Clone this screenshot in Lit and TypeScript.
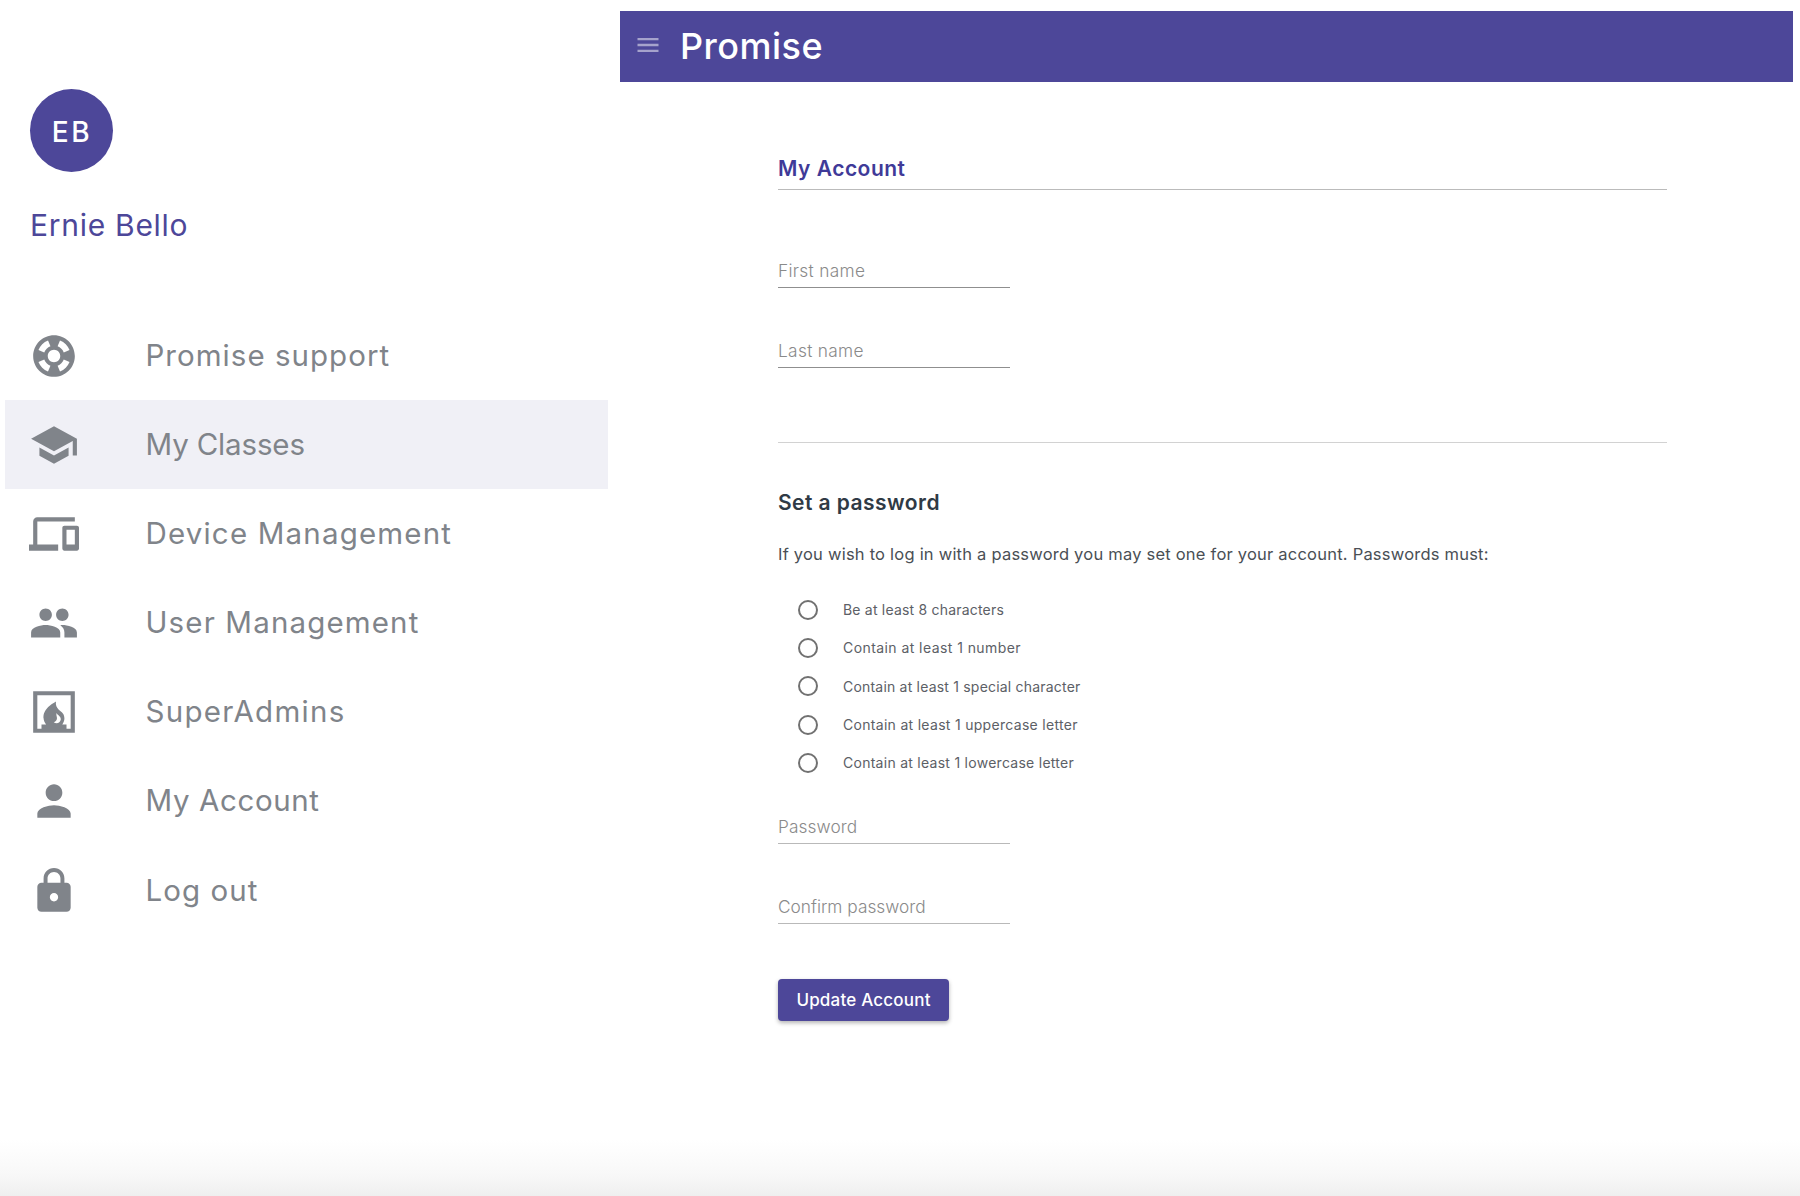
import { LitElement, html, css, svg } from "lit";
import { customElement } from "lit/decorators.js";

const icons = {
  support: "M12,2C6.48,2,2,6.48,2,12c0,5.52,4.48,10,10,10s10-4.48,10-10C22,6.48,17.52,2,12,2z M19.46,9.12l-2.78,1.15 c-0.51-1.36-1.58-2.44-2.95-2.94l1.15-2.78C16.98,5.35,18.65,7.02,19.46,9.12z M12,15c-1.66,0-3-1.34-3-3s1.34-3,3-3s3,1.34,3,3 S13.66,15,12,15z M9.13,4.54l1.17,2.78c-1.38,0.5-2.47,1.59-2.98,2.97L4.54,9.13C5.35,7.02,7.02,5.35,9.13,4.54z M4.54,14.87 l2.78-1.15c0.51,1.38,1.59,2.46,2.97,2.96l-1.17,2.78C7.02,18.65,5.35,16.98,4.54,14.87z M14.88,19.46l-1.15-2.78 c1.37-0.51,2.45-1.59,2.95-2.97l2.78,1.17C18.65,16.98,16.98,18.65,14.88,19.46z",
  school: "M5 13.18v4L12 21l7-3.82v-4L12 17l-7-3.82zM12 3L1 9l11 6 9-4.91V17h2V9L12 3z",
  devices: "M4 6h18V4H4c-1.1 0-2 .9-2 2v11H0v3h14v-3H4V6zm19 2h-6c-.55 0-1 .45-1 1v10c0 .55.45 1 1 1h6c.55 0 1-.45 1-1V9c0-.55-.45-1-1-1zm-1 9h-4v-7h4v7z",
  people: "M16 11c1.66 0 2.99-1.34 2.99-3S17.66 5 16 5c-1.66 0-3 1.34-3 3s1.34 3 3 3zm-8 0c1.66 0 2.99-1.34 2.99-3S9.66 5 8 5C6.34 5 5 6.34 5 8s1.34 3 3 3zm0 2c-2.33 0-7 1.17-7 3.5V19h14v-2.5c0-2.33-4.67-3.5-7-3.5zm8 0c-.29 0-.62.02-.97.05 1.16.84 1.97 1.97 1.97 3.45V19h6v-2.5c0-2.33-4.67-3.5-7-3.5z",
  fireplace: "M2 2v20h20V2H2zm9.86 14.96c.76-.24 1.4-1.04 1.53-1.63.13-.56-.1-1.05-.2-1.6-.08-.46-.07-.85.08-1.28.54 1.21 2.15 1.64 1.98 3.18-.19 1.69-2.11 2.37-3.39 1.33zM20 20h-2v-2h-2.02c.63-.84 1.02-1.87 1.02-3 0-1.89-1.09-2.85-1.85-3.37C12.2 9.61 13 7 13 7c-6.73 3.57-6.02 7.47-6 8 .03.96.49 2.07 1.23 3H6v2H4V4h16v16z",
  person: "M12 12c2.21 0 4-1.79 4-4s-1.79-4-4-4-4 1.79-4 4 1.79 4 4 4zm0 2c-2.67 0-8 1.34-8 4v2h16v-2c0-2.66-5.33-4-8-4z",
  lock: "M18 8h-1V6c0-2.76-2.24-5-5-5S7 3.24 7 6v2H6c-1.1 0-2 .9-2 2v10c0 1.1.9 2 2 2h12c1.1 0 2-.9 2-2V10c0-1.1-.9-2-2-2zm-6 9c-1.1 0-2-.9-2-2s.9-2 2-2 2 .9 2 2-.9 2-2 2zm3.1-9H8.9V6c0-1.71 1.39-3.1 3.1-3.1 1.71 0 3.1 1.39 3.1 3.1v2z",
  menu: "M3 18h18v-2H3v2zm0-5h18v-2H3v2zm0-7v2h18V6H3z",
};

const nav: [keyof typeof icons, string, boolean, number][] = [
  ["support", "Promise support", false, 1.03],
  ["school", "My Classes", true, -0.15],
  ["devices", "Device Management", false, 1.18],
  ["people", "User Management", false, 1.15],
  ["fireplace", "SuperAdmins", false, 1.28],
  ["person", "My Account", false, 0.62],
  ["lock", "Log out", false, 1.07],
];

const rules: [string, number][] = [
  ["Be at least 8 characters", 0.2],
  ["Contain at least 1 number", 0.43],
  ["Contain at least 1 special character", 0.2],
  ["Contain at least 1 uppercase letter", 0.3],
  ["Contain at least 1 lowercase letter", 0.27],
];

const icon = (name: keyof typeof icons) =>
  html`<svg viewBox="0 0 24 24" aria-hidden="true">${svg`<path d=${icons[name]}></path>`}</svg>`;

@customElement("app-root")
export class AppRoot extends LitElement {
  static styles = css`
    :host {
      display: flex;
      position: relative;
      width: 1800px;
      height: 1196px;
      overflow: hidden;
      background: #fff;
      font-family: Inter, "Liberation Sans", sans-serif;
    }
    :host::after {
      content: "";
      position: absolute;
      left: 0;
      right: 0;
      bottom: 0;
      height: 56px;
      background: linear-gradient(
        to bottom,
        rgba(239, 239, 239, 0) 0%,
        rgba(239, 239, 239, 0.25) 36%,
        rgba(239, 239, 239, 0.45) 62%,
        rgba(239, 239, 239, 1) 100%
      );
      pointer-events: none;
    }
    .sidebar {
      width: 620px;
      flex: none;
      box-sizing: border-box;
      padding-top: 89px;
    }
    .avatar {
      width: 83px;
      height: 83px;
      margin-left: 30px;
      border-radius: 50%;
      background: #4d4799;
      color: #fff;
      display: flex;
      align-items: center;
      justify-content: center;
      font-size: 28px;
      font-weight: 500;
      letter-spacing: 2.6px;
      padding: 2px 0 0 1px;
      box-sizing: border-box;
    }
    .name {
      margin: 35px 0 0 30px;
      height: 36px;
      line-height: 36px;
      font-size: 30px;
      font-weight: 400;
      color: #4d4799;
      letter-spacing: 0.72px;
    }
    nav {
      margin: 68px 0 0 5px;
      width: 603px;
    }
    .item {
      height: 89px;
      display: flex;
      align-items: center;
      gap: 66.5px;
      padding-left: 24px;
      color: #80848a;
      font-size: 29.5px;
    }
    .item span {
      margin-bottom: 2px;
    }
    .item:last-child {
      margin-top: 1px;
    }
    .item.active {
      background: #f0f0f6;
    }
    .item svg {
      width: 50px;
      height: 50px;
      fill: #80848a;
      flex: none;
    }
    main {
      flex: 1;
      min-width: 0;
      padding: 11px 7px 0 0;
    }
    header {
      height: 71px;
      background: #4d4799;
      display: flex;
      align-items: center;
      color: #fff;
      padding-left: 14px;
      gap: 18px;
    }
    header svg {
      width: 28px;
      height: 28px;
      margin-bottom: 3px;
      fill: rgba(255, 255, 255, 0.5);
      flex: none;
    }
    header h1 {
      margin: 0 0 2px;
      font-size: 36px;
      font-weight: 500;
      letter-spacing: 0.5px;
    }
    .form {
      width: 889px;
      margin: 0 0 0 158px;
      padding-top: 71px;
    }
    h2 {
      margin: 0;
      height: 37px;
      line-height: 32px;
      font-size: 21px;
      font-weight: 600;
      color: #3f3a98;
      border-bottom: 1.5px solid #bbbbbb;
      box-sizing: border-box;
      letter-spacing: 0.5px;
    }
    .field {
      width: 232px;
      height: 32px;
      box-sizing: border-box;
      border-bottom: 1.5px solid #8f8f8f;
      color: #8a8a8a;
      font-size: 17.3px;
      font-weight: 300;
      line-height: 30px;
      letter-spacing: 0.1px;
    }
    .wide {
      letter-spacing: 0.32px;
    }
    .first {
      margin-top: 66px;
    }
    .next {
      margin-top: 48px;
    }
    .pw {
      border-bottom-color: #b9b9b9;
    }
    .confirm {
      letter-spacing: 0;
    }
    hr {
      border: 0;
      border-top: 1px solid #d2d2d2;
      margin: 74px 0 0;
    }
    h3 {
      margin: 46px 0 0;
      height: 28px;
      line-height: 28px;
      font-size: 21px;
      font-weight: 600;
      color: #2f3a45;
      letter-spacing: 0.45px;
    }
    p {
      margin: 25px 0 0;
      height: 24px;
      line-height: 24px;
      font-size: 16.5px;
      font-weight: 400;
      color: #4a4f55;
      letter-spacing: 0.22px;
    }
    ul {
      list-style: none;
      margin: 24.5px 0 0;
      padding: 0 0 0 20px;
    }
    li {
      height: 38.3px;
      display: flex;
      align-items: center;
      gap: 25px;
      font-size: 14px;
      font-weight: 400;
      color: #5c6066;
    }
    li i {
      width: 20px;
      height: 20px;
      box-sizing: border-box;
      border: 2px solid #717171;
      border-radius: 50%;
      flex: none;
    }
    .pw.top {
      margin-top: 30px;
    }
    button {
      display: block;
      margin-top: 55px;
      width: 171px;
      height: 42px;
      padding: 0;
      border: 0;
      border-radius: 4px;
      background: #4d4799;
      color: #fff;
      font: inherit;
      font-size: 17px;
      font-weight: 500;
      letter-spacing: 0.2px;
      box-shadow: 0 2px 4px rgba(0, 0, 0, 0.3);
    }
  `;

  render() {
    return html`
      <aside class="sidebar">
        <div class="avatar">EB</div>
        <div class="name">Ernie Bello</div>
        <nav>
          ${nav.map(
            ([name, label, active, spacing]) => html`
              <div class="item ${active ? "active" : ""}">
                ${icon(name)}<span style="letter-spacing:${spacing}px">${label}</span>
              </div>
            `
          )}
        </nav>
      </aside>
      <main>
        <header>${icon("menu")}<h1>Promise</h1></header>
        <div class="form">
          <h2>My Account</h2>
          <div class="field first wide">First name</div>
          <div class="field next wide">Last name</div>
          <hr />
          <h3>Set a password</h3>
          <p>If you wish to log in with a password you may set one for your account. Passwords must:</p>
          <ul>
            ${rules.map(
              ([r, spacing]) => html`<li><i></i><span style="letter-spacing:${spacing}px">${r}</span></li>`
            )}
          </ul>
          <div class="field pw top">Password</div>
          <div class="field pw next confirm">Confirm password</div>
          <button>Update Account</button>
        </div>
      </main>
    `;
  }
}
